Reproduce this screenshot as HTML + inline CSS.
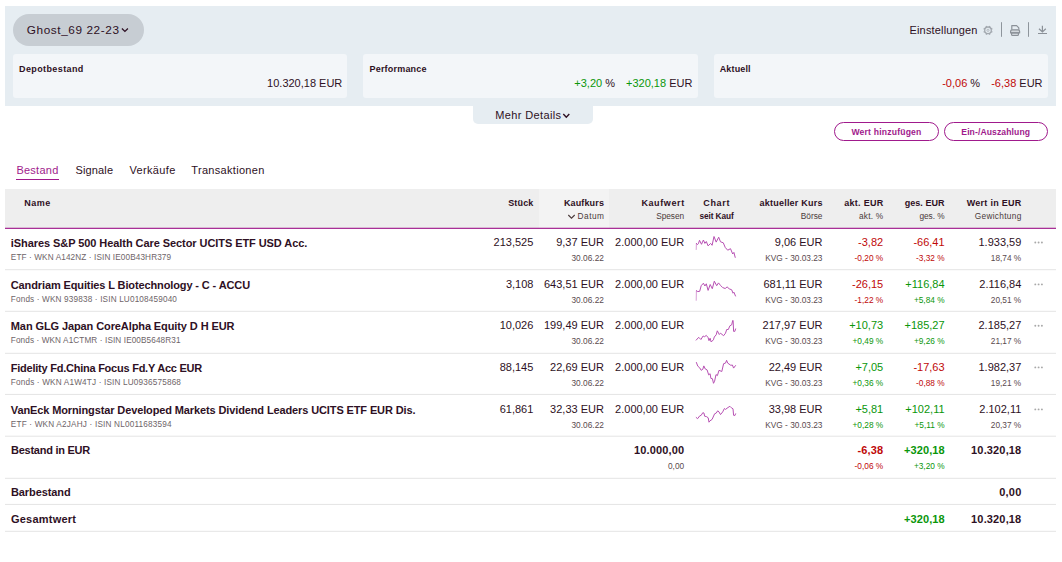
<!DOCTYPE html>
<html lang="de"><head><meta charset="utf-8"><title>Musterdepot</title>
<style>
html,body{margin:0;padding:0;background:#fff;}
body{width:1062px;height:562px;position:relative;overflow:hidden;font-family:"Liberation Sans",sans-serif;color:#2e1024;font-size:11px;}
.a{position:absolute;white-space:nowrap;line-height:1;}
.panel{left:5px;top:6px;width:1051px;height:100px;background:#e6edf2;}
.pill{left:13px;top:14px;width:131px;height:32px;border-radius:16px;background:#c7cdd3;}
.card{top:54px;height:43.5px;background:#f3f6f9;border-radius:3px;}
.lbl{font-weight:bold;font-size:9px;}
.big{font-size:11px;}
.p{color:#0a960a;}
.n{color:#c00808;}
.tab{left:473px;top:105px;width:120px;height:19px;background:#e6edf2;border-radius:0 0 5px 5px;}
.btn{top:122px;height:17px;border:1px solid #a01a8c;border-radius:10px;}
.bt{color:#a01a8c;font-size:8.6px;font-weight:bold;}
.nav{font-size:11px;}
.hd{left:5px;top:189px;width:1051px;height:39px;background:#eeeeee;}
.hs{left:539px;top:189px;width:70px;height:39px;background:#f3f3f3;}
.h1{font-weight:bold;font-size:9px;}
.h2{font-size:8.3px;color:#4a3a3a;}
.nm{font-weight:bold;font-size:11px;}
.sb{font-size:8.2px;color:#6e6468;}
.v{font-size:11px;}
.s{font-size:8.3px;color:#5a4a4e;}
.s.p{color:#0a960a;}
.s.n{color:#c00808;}
.b{font-weight:bold;}
svg{position:absolute;left:0;top:0;overflow:visible;}
</style></head><body>
<div class="a panel"></div>
<div class="a pill"></div>
<div class="a card" style="left:13px;width:334px;"></div>
<div class="a card" style="left:363px;width:335px;"></div>
<div class="a card" style="left:714px;width:334px;"></div>
<div class="a tab"></div>
<div class="a btn" style="left:834px;width:103px;"></div>
<div class="a btn" style="left:944px;width:102px;"></div>
<div class="a" style="left:16px;top:179px;width:43px;height:1px;background:#a01a8c;"></div>
<div class="a hd"></div><div class="a hs"></div>
<svg width="1062" height="562" viewBox="0 0 1062 562" fill="none">
<rect x="1001" y="22.2" width="1" height="14.6" fill="#8e959c"/><rect x="1028" y="22.2" width="1" height="14.6" fill="#8e959c"/>
<rect x="5" y="227.75" width="1051" height="1.15" fill="#a01a8c"/>
<rect x="5" y="269.2" width="1051" height="1" fill="#e4e4e4"/>
<rect x="5" y="310.8" width="1051" height="1" fill="#e4e4e4"/>
<rect x="5" y="352.8" width="1051" height="1" fill="#e4e4e4"/>
<rect x="5" y="393.9" width="1051" height="1" fill="#e4e4e4"/>
<rect x="5" y="435.7" width="1051" height="1" fill="#e4e4e4"/>
<rect x="5" y="477.8" width="1051" height="1" fill="#e4e4e4"/>
<rect x="5" y="503.9" width="1051" height="1" fill="#e4e4e4"/>
<rect x="5" y="530.8" width="1051" height="1" fill="#e4e4e4"/>
<path d="M696.2 249.9 L696.4 243.4" stroke="#b750b3" stroke-width="1" stroke-opacity=".55"/>
<path d="M696.4 243.4 L697.3 244.6 L698.4 243.7 L699.5 240.3 L701.5 244.3 L703.4 240.0 L704.9 243.4 L706.3 241.5 L708.1 245.9 L710.6 243.4 L712.1 245.3 L714.0 236.5 L716.2 242.1 L718.7 237.2 L720.5 241.8 L723.3 242.8 L725.2 247.4 L727.7 250.2 L730.5 248.7 L732.7 254.0 L733.9 252.4 L735.2 257.4" stroke="#b750b3" stroke-width="1" stroke-linejoin="round" stroke-linecap="round"/>
<path d="M696.2 300.7 L696.4 290.7" stroke="#b750b3" stroke-width="1" stroke-opacity=".55"/>
<path d="M696.4 290.7 L697.8 291.6 L699.7 291.3 L701.2 285.7 L703.4 283.2 L704.9 286.0 L706.3 283.8 L708.1 290.4 L710.2 284.5 L712.3 288.7 L714.3 281.2 L716.7 285.7 L718.5 282.9 L720.5 285.4 L722.7 287.6 L725.2 288.5 L727.1 286.9 L729.2 288.8 L731.7 289.8 L733.0 293.2 L733.9 292.2 L735.5 296.0" stroke="#b750b3" stroke-width="1" stroke-linejoin="round" stroke-linecap="round"/>
<path d="M696.2 340.1 L698.7 337.3 L700.9 339.5 L703.1 336.0 L704.6 336.7 L706.3 335.4 L708.1 337.6 L709.0 340.7 L710.1 338.2 L711.2 342.0 L713.4 339.8 L714.3 337.0 L716.2 334.8 L717.3 330.8 L719.3 334.5 L720.5 333.2 L723.6 335.7 L725.5 333.2 L726.7 329.5 L728.3 329.5 L729.9 325.8 L731.7 324.8 L732.7 320.5 L733.1 320.5 L733.6 331.4 L734.8 331.4 L735.6 328.9" stroke="#b750b3" stroke-width="1" stroke-linejoin="round" stroke-linecap="round"/>
<path d="M696.4 362.5 L697.8 366.2 L699.7 367.8 L701.2 370.3 L702.8 369.3 L703.8 365.9 L705.3 369.0 L707.1 369.9 L708.7 374.9 L710.1 373.7 L710.9 378.4 L712.4 378.7 L713.5 383.3 L714.6 381.2 L716.0 374.6 L717.4 375.6 L719.0 370.3 L721.8 371.5 L723.6 363.7 L725.5 363.1 L726.6 360.3 L727.7 363.1 L730.8 365.3 L732.4 365.0 L733.6 368.1 L735.5 365.6" stroke="#b750b3" stroke-width="1" stroke-linejoin="round" stroke-linecap="round"/>
<path d="M696.2 417.5 L697.6 418.7 L699.7 415.9 L701.2 415.3 L702.8 412.7 L704.0 413.1 L704.6 416.2 L706.5 416.6 L708.2 417.8 L709.0 422.2 L709.9 420.9 L712.1 419.4 L714.6 413.8 L716.2 413.1 L717.7 410.8 L719.0 411.9 L720.5 414.6 L722.7 411.9 L724.4 408.5 L725.5 409.4 L728.0 407.5 L729.9 406.3 L731.4 407.8 L733.0 408.8 L733.6 415.3 L734.8 415.6 L735.6 413.8" stroke="#b750b3" stroke-width="1" stroke-linejoin="round" stroke-linecap="round"/>
<circle cx="1035.3" cy="242.5" r="0.95" fill="#a8a8a8"/>
<circle cx="1038.6" cy="242.5" r="0.95" fill="#a8a8a8"/>
<circle cx="1041.9" cy="242.5" r="0.95" fill="#a8a8a8"/>
<circle cx="1035.3" cy="284.4" r="0.95" fill="#a8a8a8"/>
<circle cx="1038.6" cy="284.4" r="0.95" fill="#a8a8a8"/>
<circle cx="1041.9" cy="284.4" r="0.95" fill="#a8a8a8"/>
<circle cx="1035.3" cy="325.8" r="0.95" fill="#a8a8a8"/>
<circle cx="1038.6" cy="325.8" r="0.95" fill="#a8a8a8"/>
<circle cx="1041.9" cy="325.8" r="0.95" fill="#a8a8a8"/>
<circle cx="1035.3" cy="367.4" r="0.95" fill="#a8a8a8"/>
<circle cx="1038.6" cy="367.4" r="0.95" fill="#a8a8a8"/>
<circle cx="1041.9" cy="367.4" r="0.95" fill="#a8a8a8"/>
<circle cx="1035.3" cy="409.4" r="0.95" fill="#a8a8a8"/>
<circle cx="1038.6" cy="409.4" r="0.95" fill="#a8a8a8"/>
<circle cx="1041.9" cy="409.4" r="0.95" fill="#a8a8a8"/>
<path d="M121.9 28.5 l3 2.9 l3 -2.9" stroke="#2e1024" stroke-width="1.3"/>
<path d="M563.3 114 l3 3.2 l3 -3.2" stroke="#2e1024" stroke-width="1.4"/>
<path d="M568.3 215 l3.2 3.2 l3.2 -3.2" stroke="#4a3a3a" stroke-width="1.1"/>
<g stroke="#a2a8af" fill="none"><circle cx="988.0" cy="30.3" r="3.3" stroke-width="1.3"/><g stroke-width="1.5"><line x1="991.14" y1="31.60" x2="992.34" y2="32.10"/><line x1="989.30" y1="33.44" x2="989.80" y2="34.64"/><line x1="986.70" y1="33.44" x2="986.20" y2="34.64"/><line x1="984.86" y1="31.60" x2="983.66" y2="32.10"/><line x1="984.86" y1="29.00" x2="983.66" y2="28.50"/><line x1="986.70" y1="27.16" x2="986.20" y2="25.96"/><line x1="989.30" y1="27.16" x2="989.80" y2="25.96"/><line x1="991.14" y1="29.00" x2="992.34" y2="28.50"/></g><circle cx="988.0" cy="30.3" r="1.1" stroke-width=".7"/></g>
<g stroke="#8b9198" stroke-width="1.2" fill="none" stroke-linejoin="round"><path d="M1011.8 29.8 V25.6 h4.8 l2.2 2.2 V29.8"/><path d="M1010.6 32.9 v-1.6 q0 -1.5 1.5 -1.5 h6 q1.5 0 1.5 1.5 v1.6 z" fill="#d3d8dd"/><path d="M1011.6 32.9 h6.8 v1.6 q0 .9 -.9 .9 h-5 q-.9 0 -.9 -.9 z"/></g>
<g stroke="#8b9198" stroke-width="1.2" fill="none"><path d="M1042.4 25.7 V32 M1039 28.7 l3.4 3.3 l3.4 -3.3 M1038 33.5 h9"/></g>
</svg>
<div class="a " style="font-size:11.8px;letter-spacing:0.58px;left:26.8px;top:25.0px;">Ghost_69 22-23</div>
<div class="a lbl" style="letter-spacing:0.39px;left:19.0px;top:65.0px;">Depotbestand</div>
<div class="a lbl" style="letter-spacing:0.20px;left:369.5px;top:65.0px;">Performance</div>
<div class="a lbl" style="letter-spacing:0.15px;left:719.7px;top:65.0px;">Aktuell</div>
<div class="a big" style="left:267.1px;top:78.0px;">10.320,18 EUR</div>
<div class="a big" style="left:574.3px;top:78.0px;"><span class="p">+3,20</span> %</div>
<div class="a big" style="left:626.0px;top:78.0px;"><span class="p">+320,18</span> EUR</div>
<div class="a big" style="left:942.2px;top:78.0px;"><span class="n">-0,06</span> %</div>
<div class="a big" style="left:991.2px;top:78.0px;"><span class="n">-6,38</span> EUR</div>
<div class="a " style="font-size:11px;letter-spacing:0.16px;left:909.5px;top:25.0px;">Einstellungen</div>
<div class="a " style="font-size:11px;letter-spacing:0.36px;left:495.3px;top:110.0px;">Mehr Details</div>
<div class="a bt" style="letter-spacing:0.20px;left:851.4px;top:128.0px;">Wert hinzufügen</div>
<div class="a bt" style="letter-spacing:0.10px;left:961.3px;top:128.0px;">Ein-/Auszahlung</div>
<div class="a nav" style="color:#a01a8c;letter-spacing:0.25px;left:16.4px;top:165.0px;">Bestand</div>
<div class="a nav" style="letter-spacing:0.12px;left:75.6px;top:165.0px;">Signale</div>
<div class="a nav" style="letter-spacing:0.34px;left:129.5px;top:165.0px;">Verkäufe</div>
<div class="a nav" style="letter-spacing:0.31px;left:191.3px;top:165.0px;">Transaktionen</div>
<div class="a h1" style="letter-spacing:0.46px;left:24.3px;top:199.0px;">Name</div>
<div class="a h1" style="letter-spacing:0.17px;left:508.2px;top:199.0px;">Stück</div>
<div class="a h1" style="letter-spacing:0.14px;left:563.9px;top:199.0px;">Kaufkurs</div>
<div class="a h2" style="letter-spacing:0.47px;left:577.6px;top:212.0px;">Datum</div>
<div class="a h1" style="letter-spacing:0.61px;left:641.4px;top:199.0px;">Kaufwert</div>
<div class="a h2" style="letter-spacing:-0.03px;left:656.2px;top:212.0px;">Spesen</div>
<div class="a h1" style="letter-spacing:0.70px;left:703.2px;top:199.0px;">Chart</div>
<div class="a h2 b" style="color:#2e1024;letter-spacing:-0.09px;left:699.4px;top:212.0px;">seit Kauf</div>
<div class="a h1" style="letter-spacing:0.23px;left:759.5px;top:199.0px;">aktueller Kurs</div>
<div class="a h2" style="left:800.8px;top:212.0px;">Börse</div>
<div class="a h1" style="letter-spacing:0.27px;left:844.3px;top:199.0px;">akt. EUR</div>
<div class="a h2" style="letter-spacing:0.23px;left:859.0px;top:212.0px;">akt. %</div>
<div class="a h1" style="letter-spacing:0.05px;left:904.7px;top:199.0px;">ges. EUR</div>
<div class="a h2" style="letter-spacing:-0.04px;left:919.4px;top:212.0px;">ges. %</div>
<div class="a h1" style="letter-spacing:0.28px;left:966.7px;top:199.0px;">Wert in EUR</div>
<div class="a h2" style="letter-spacing:0.31px;left:974.7px;top:212.0px;">Gewichtung</div>
<div class="a nm" style="letter-spacing:-0.07px;left:10.8px;top:238.0px;">iShares S&amp;P 500 Health Care Sector UCITS ETF USD Acc.</div>
<div class="a sb" style="letter-spacing:0.12px;left:10.8px;top:254.0px;">ETF · WKN A142NZ · ISIN IE00B43HR379</div>
<div class="a v" style="left:493.6px;top:237.0px;">213,525</div>
<div class="a v" style="left:556.2px;top:237.0px;">9,37 EUR</div>
<div class="a s" style="letter-spacing:0.03px;left:571.4px;top:254.0px;">30.06.22</div>
<div class="a v" style="left:615.1px;top:237.0px;">2.000,00 EUR</div>
<div class="a v" style="left:774.8px;top:237.0px;">9,06 EUR</div>
<div class="a s" style="left:765.3px;top:254.0px;">KVG - 30.03.23</div>
<div class="a v n" style="left:858.1px;top:237.0px;">-3,82</div>
<div class="a s n" style="left:854.6px;top:254.0px;">-0,20 %</div>
<div class="a v n" style="left:913.4px;top:237.0px;">-66,41</div>
<div class="a s n" style="left:916.0px;top:254.0px;">-3,32 %</div>
<div class="a v" style="left:978.5px;top:237.0px;">1.933,59</div>
<div class="a s" style="left:990.8px;top:254.0px;">18,74 %</div>
<div class="a nm" style="letter-spacing:-0.12px;left:10.8px;top:280.0px;">Candriam Equities L Biotechnology - C - ACCU</div>
<div class="a sb" style="letter-spacing:0.16px;left:10.8px;top:296.0px;">Fonds · WKN 939838 · ISIN LU0108459040</div>
<div class="a v" style="left:505.9px;top:279.0px;">3,108</div>
<div class="a v" style="left:544.0px;top:279.0px;">643,51 EUR</div>
<div class="a s" style="letter-spacing:0.03px;left:571.4px;top:296.0px;">30.06.22</div>
<div class="a v" style="left:615.1px;top:279.0px;">2.000,00 EUR</div>
<div class="a v" style="left:763.4px;top:279.0px;">681,11 EUR</div>
<div class="a s" style="left:765.3px;top:296.0px;">KVG - 30.03.23</div>
<div class="a v n" style="left:852.0px;top:279.0px;">-26,15</div>
<div class="a s n" style="left:854.6px;top:296.0px;">-1,22 %</div>
<div class="a v p" style="left:905.3px;top:279.0px;">+116,84</div>
<div class="a s p" style="left:913.9px;top:296.0px;">+5,84 %</div>
<div class="a v" style="left:979.3px;top:279.0px;">2.116,84</div>
<div class="a s" style="left:990.8px;top:296.0px;">20,51 %</div>
<div class="a nm" style="letter-spacing:-0.10px;left:10.8px;top:321.0px;">Man GLG Japan CoreAlpha Equity D H EUR</div>
<div class="a sb" style="letter-spacing:0.11px;left:10.8px;top:337.0px;">Fonds · WKN A1CTMR · ISIN IE00B5648R31</div>
<div class="a v" style="left:499.7px;top:320.0px;">10,026</div>
<div class="a v" style="left:544.0px;top:320.0px;">199,49 EUR</div>
<div class="a s" style="letter-spacing:0.03px;left:571.4px;top:337.0px;">30.06.22</div>
<div class="a v" style="left:615.1px;top:320.0px;">2.000,00 EUR</div>
<div class="a v" style="left:762.6px;top:320.0px;">217,97 EUR</div>
<div class="a s" style="left:765.3px;top:337.0px;">KVG - 30.03.23</div>
<div class="a v p" style="left:849.2px;top:320.0px;">+10,73</div>
<div class="a s p" style="left:852.5px;top:337.0px;">+0,49 %</div>
<div class="a v p" style="left:904.5px;top:320.0px;">+185,27</div>
<div class="a s p" style="left:913.9px;top:337.0px;">+9,26 %</div>
<div class="a v" style="left:978.5px;top:320.0px;">2.185,27</div>
<div class="a s" style="left:990.8px;top:337.0px;">21,17 %</div>
<div class="a nm" style="letter-spacing:-0.24px;left:10.8px;top:363.0px;">Fidelity Fd.China Focus Fd.Y Acc EUR</div>
<div class="a sb" style="letter-spacing:0.17px;left:10.8px;top:379.0px;">Fonds · WKN A1W4TJ · ISIN LU0936575868</div>
<div class="a v" style="left:499.7px;top:362.0px;">88,145</div>
<div class="a v" style="left:550.1px;top:362.0px;">22,69 EUR</div>
<div class="a s" style="letter-spacing:0.03px;left:571.4px;top:379.0px;">30.06.22</div>
<div class="a v" style="left:615.1px;top:362.0px;">2.000,00 EUR</div>
<div class="a v" style="left:768.7px;top:362.0px;">22,49 EUR</div>
<div class="a s" style="left:765.3px;top:379.0px;">KVG - 30.03.23</div>
<div class="a v p" style="left:855.4px;top:362.0px;">+7,05</div>
<div class="a s p" style="left:852.5px;top:379.0px;">+0,36 %</div>
<div class="a v n" style="left:913.4px;top:362.0px;">-17,63</div>
<div class="a s n" style="left:916.0px;top:379.0px;">-0,88 %</div>
<div class="a v" style="left:978.5px;top:362.0px;">1.982,37</div>
<div class="a s" style="left:990.8px;top:379.0px;">19,21 %</div>
<div class="a nm" style="letter-spacing:-0.12px;left:10.8px;top:405.0px;">VanEck Morningstar Developed Markets Dividend Leaders UCITS ETF EUR Dis.</div>
<div class="a sb" style="letter-spacing:0.19px;left:10.8px;top:421.0px;">ETF · WKN A2JAHJ · ISIN NL0011683594</div>
<div class="a v" style="left:499.7px;top:404.0px;">61,861</div>
<div class="a v" style="left:550.1px;top:404.0px;">32,33 EUR</div>
<div class="a s" style="letter-spacing:0.03px;left:571.4px;top:421.0px;">30.06.22</div>
<div class="a v" style="left:615.1px;top:404.0px;">2.000,00 EUR</div>
<div class="a v" style="left:768.7px;top:404.0px;">33,98 EUR</div>
<div class="a s" style="left:765.3px;top:421.0px;">KVG - 30.03.23</div>
<div class="a v p" style="left:855.4px;top:404.0px;">+5,81</div>
<div class="a s p" style="left:852.5px;top:421.0px;">+0,28 %</div>
<div class="a v p" style="left:905.3px;top:404.0px;">+102,11</div>
<div class="a s p" style="left:914.5px;top:421.0px;">+5,11 %</div>
<div class="a v" style="left:979.3px;top:404.0px;">2.102,11</div>
<div class="a s" style="left:990.8px;top:421.0px;">20,37 %</div>
<div class="a nm" style="letter-spacing:-0.25px;left:11.0px;top:445.0px;">Bestand in EUR</div>
<div class="a v b" style="letter-spacing:0.17px;left:633.9px;top:445.0px;">10.000,00</div>
<div class="a s" style="left:668.0px;top:462.0px;">0,00</div>
<div class="a v b n" style="letter-spacing:0.18px;left:857.4px;top:445.0px;">-6,38</div>
<div class="a s n" style="left:854.6px;top:462.0px;">-0,06 %</div>
<div class="a v b p" style="letter-spacing:0.09px;left:904.0px;top:445.0px;">+320,18</div>
<div class="a s p" style="left:913.9px;top:462.0px;">+3,20 %</div>
<div class="a v b" style="letter-spacing:0.15px;left:971.1px;top:445.0px;">10.320,18</div>
<div class="a nm" style="letter-spacing:-0.10px;left:11.0px;top:487.0px;">Barbestand</div>
<div class="a v b" style="letter-spacing:0.19px;left:999.3px;top:487.0px;">0,00</div>
<div class="a nm" style="letter-spacing:0.22px;left:11.0px;top:514.0px;">Gesamtwert</div>
<div class="a v b p" style="letter-spacing:0.09px;left:904.0px;top:514.0px;">+320,18</div>
<div class="a v b" style="letter-spacing:0.15px;left:971.1px;top:514.0px;">10.320,18</div>
</body></html>
